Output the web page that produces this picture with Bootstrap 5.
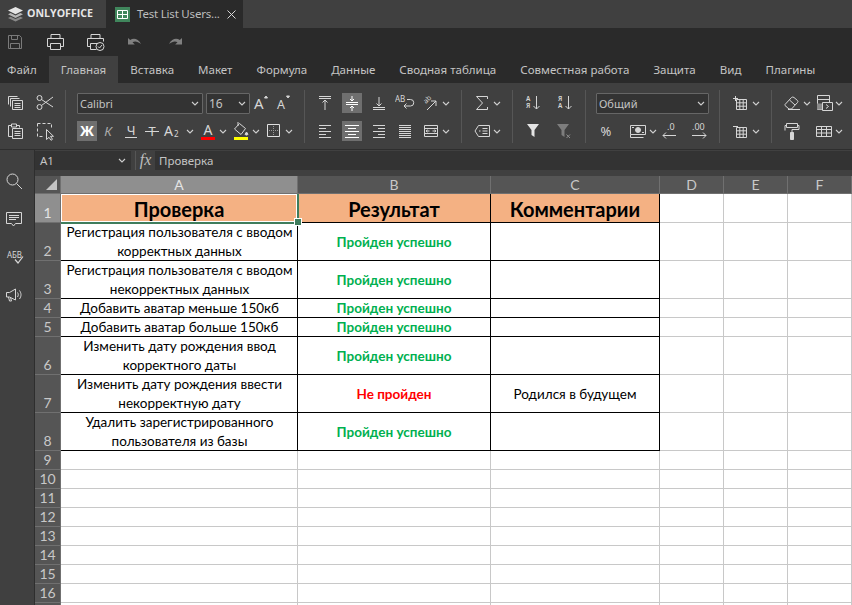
<!DOCTYPE html>
<html lang="ru">
<head>
    <meta charset="UTF-8">
    <meta name="viewport" content="width=device-width, initial-scale=1.0">
    <title>Test List Users</title>
    <link href="https://cdn.jsdelivr.net/npm/bootstrap@5.3.3/dist/css/bootstrap.min.css" rel="stylesheet">
    <script defer src="https://cdn.jsdelivr.net/npm/bootstrap@5.3.3/dist/js/bootstrap.bundle.min.js"></script>
    <style>
        html, body { height: 605px; overflow: hidden; background: #404040; }
        body { font-family: "Noto Sans", "Liberation Sans", sans-serif; font-size: 11.55px; color: #d0d0d0; }
        svg { display: block; fill: none; stroke: #d6d6d6; stroke-width: 1; }
        svg text { fill: #d6d6d6; stroke: none; font-family: "Noto Sans", sans-serif; }

        .title-bar { height: 28px; background: #404040; }
        .logo-box { width: 107px; padding-left: 7px; border-right: 1px solid #2a2a2a; gap: 3px; }
        .logo-text { font-weight: 700; font-size: 10.6px; color: #e6e6e6; font-family: "Open Sans", sans-serif; }
        .doc-tab { width: 136px; background: #2a2a2a; padding-left: 8px; gap: 7px; font-size: 11.5px; color: #bdbdbd; letter-spacing: -.2px; }

        .quick-bar { height: 28px; background: #2a2a2a; padding-left: 5px; gap: 20px; }
        .quick-bar > div { width: 20px; }

        .tab-bar { height: 27px; background: #2a2a2a; }
        .tab-item { padding: 0 12px; line-height: 27px; color: #c4c4c4; }
        .tab-item:first-child { padding-left: 7px; }
        .tab-item.cur { background: #404040; }

        .tool-bar { height: 67px; background: #404040; padding: 10px 0 0 5px; border-bottom: 1px solid #2e2e2e; }
        .tb-grp { display: flex; flex-direction: column; gap: 8px; }
        .tb-row { display: flex; height: 20px; align-items: center; }
        .tb-sep { width: 1px; height: 53px; background: #565656; margin: -3px 10px 0 10px; }
        .ic { width: 20px; height: 20px; flex: none; }
        .ic.on { background: #6f6f6f; }
        .crt { width: 10px; height: 20px; flex: none; display: flex; align-items: center; justify-content: center; }
        .combo { height: 21px; background: #333; border: 1px solid #666; border-radius: 1px; padding: 0 3px 0 2px; line-height: 19px; font-size: 11px; color: #c4c4c4; display: flex; justify-content: space-between; align-items: center; }
        .sp1 { margin-left: 1px; } .sp2 { margin-left: 2px; } .sp3 { margin-left: 3px; }
        .sp7 { margin-left: 7px; } .sp6 { margin-left: 6px; } .sp10 { margin-left: 10px; } .sp12 { margin-left: 12px; }

        .side-bar { width: 35px; flex: none; background: #404040; border-right: 1px solid #2e2e2e; padding-top: 21px; gap: 18px; }
        .side-bar > div { width: 20px; height: 20px; margin-left: 4px; }

        .formula-bar { height: 26px; background: #404040; padding-top: 1px; }
        .name-box { width: 96px; height: 19px; background: #333; padding: 0 5px; font-size: 11.5px; line-height: 19px; color: #c4c4c4; }
        .fx-box { width: 20px; height: 19px; margin-left: 4px; font-family: "Liberation Serif", serif; font-style: italic; font-size: 16px; line-height: 17px; color: #bdbdbd; text-align: center; border-left: 1px solid #565656; }
        .formula-input { height: 19px; background: #333; padding: 0 4px; line-height: 19px; font-size: 11.5px; color: #c4c4c4; }

        .sheet-wrap { position: relative; }
        .sheet { border-collapse: separate; border-spacing: 0; table-layout: fixed; width: 817px; font-family: Lato, "Liberation Sans", sans-serif; font-size: 13.5px; color: #000; background: #fff; }
        .sheet th { background: #555; color: #c8c8c8; font-weight: 400; text-align: center; border-right: 1px solid #707070; border-bottom: 1px solid #707070; padding: 0; font-size: 14px; }
        .sheet thead th { height: 18px; line-height: 17px; }
        .sheet tbody th { vertical-align: bottom; line-height: 18px; }
        .sheet th.sel { background: #8f8f8f; color: #e4e4e4; }
        .sheet td { border-right: 1px solid #c8c8c8; border-bottom: 1px solid #c8c8c8; padding: 0; text-align: center; vertical-align: middle; line-height: 18px; }
        .sheet td.bx { border-right-color: #000; border-bottom-color: #000; }
        .sheet td.hd { background: #f4b183; font-size: 20px; font-weight: 700; line-height: 24px; padding-top: 2px; }
        .sheet td.ok { color: #00b050; font-weight: 700; }
        .sheet td.bad { color: #f00; font-weight: 700; }
        .sheet td.a-col { padding-left: 1px; }
        .sheet .r2 td.ok, .sheet .r2 td.bad, .sheet .r2 td.cmt { padding-top: 1px; }
        .two-ln { line-height: 19px; margin-bottom: -1px; }
        .r1 { height: 29px; } .r2 { height: 38px; } .r3 { height: 19px; }
        .corner { position: relative; }
        .corner::after { content: ""; position: absolute; right: 3px; bottom: 3px; border-left: 11px solid transparent; border-bottom: 11px solid #c4c4c4; }
        .sel-frame { position: absolute; left: 26px; top: 18px; width: 238px; height: 30px; border-right: 2px solid #3f7d5c; border-bottom: 2px solid #3f7d5c; box-shadow: inset 0 0 0 1px #fff; pointer-events: none; }
        .sel-dot { position: absolute; left: 259px; top: 42px; width: 6px; height: 6px; background: #3f7d5c; border: 1px solid #fff; box-sizing: content-box; }
    </style>
</head>
<body>
    <svg width="0" height="0" class="position-absolute">
        <defs>
            <symbol id="caret" viewBox="0 0 8 5"><path d="M1 1l3 3 3-3" fill="none" stroke="#cfcfcf" stroke-width="1.1"/></symbol>
        </defs>
    </svg>

    <!-- title bar -->
    <div class="title-bar d-flex">
        <div class="logo-box d-flex align-items-center">
            <svg width="17" height="17" viewBox="0 0 17 17" style="stroke:none"><path d="M8.500 1L16 4.600 8.500 8.200 1 4.600z" fill="#e6e6e6"/><path d="M1 8.300l2.600-1.200 4.900 2.300 4.900-2.300L16 8.300l-7.500 3.600z" fill="#b8b8b8"/><path d="M1 12l2.600-1.200 4.900 2.300 4.900-2.300L16 12l-7.500 3.600z" fill="#8a8a8a"/></svg>
            <span class="logo-text">ONLYOFFICE</span>
        </div>
        <div class="doc-tab d-flex align-items-center">
            <svg width="15" height="15" viewBox="0 0 15 15" style="stroke:#fff"><rect width="15" height="15" fill="#40865c" stroke="none"/><path d="M2.500 3.500h10v8h-10zM2.500 7.500h10M7.500 3.500v8"/></svg>
            <span class="text-nowrap">Test List Users...</span>
            <svg width="9" height="9" viewBox="0 0 9 9"><path d="M.5.5l8 8M8.500.5l-8 8"/></svg>
        </div>
    </div>

    <!-- quick access -->
    <div class="quick-bar d-flex align-items-center">
        <div><svg width="20" height="20" viewBox="0 0 20 20" style="stroke:#7a7a7a"><path d="M3.500 3.500h11l2 2v11h-13zM6.500 3.500v4h6v-4M5.500 16.500v-5h9v5"/></svg></div>
        <div><svg width="20" height="20" viewBox="0 0 20 20"><path d="M6 6.500v-4h9v4M5.500 14.500h-3v-8h16v8h-3M5.500 11.500h10v6h-10z"/></svg></div>
        <div><svg width="20" height="20" viewBox="0 0 20 20"><path d="M6 6.500v-4h9v4M5.500 14.500h-3v-8h16v3M5.500 11.500h7M5.500 11.500v6h6"/><circle cx="15" cy="14.500" r="4"/><path d="M13 14.500l1.500 1.500 2.500-3"/></svg></div>
        <div><svg width="20" height="20" viewBox="0 0 20 20" style="stroke:none"><path d="M3 12.500V6l2.200 2.100c3.300-2.300 7.800-1.600 10.800 4-3.200-2.800-6.200-3.400-8.500-1.900l2.300 2.300z" fill="#808080"/></svg></div>
        <div><svg width="20" height="20" viewBox="0 0 20 20" style="stroke:none"><path d="M17 12.500V6l-2.200 2.100c-3.300-2.300-7.800-1.600-10.800 4 3.200-2.800 6.200-3.400 8.500-1.900l-2.300 2.300z" fill="#808080"/></svg></div>
    </div>

    <!-- ribbon tabs -->
    <div class="tab-bar d-flex">
        <div class="tab-item">Файл</div>
        <div class="tab-item cur">Главная</div>
        <div class="tab-item">Вставка</div>
        <div class="tab-item">Макет</div>
        <div class="tab-item">Формула</div>
        <div class="tab-item">Данные</div>
        <div class="tab-item">Сводная таблица</div>
        <div class="tab-item">Совместная работа</div>
        <div class="tab-item">Защита</div>
        <div class="tab-item">Вид</div>
        <div class="tab-item">Плагины</div>
    </div>

    <!-- ribbon toolbar -->
    <div class="tool-bar d-flex">
        <div class="tb-grp">
            <div class="tb-row">
                <div class="ic"><svg width="20" height="20" viewBox="0 0 20 20"><path d="M3.500 11.500v-8h9M5.500 13.500v-8h9M7.500 7.500h10v9h-10zM9.500 10.500h6M9.500 12.500h6M9.500 14.500h6"/></svg></div>
                <div class="ic sp10"><svg width="20" height="20" viewBox="0 0 20 20"><circle cx="4.500" cy="5" r="2.500"/><circle cx="4.500" cy="14" r="2.500"/><path d="M6.500 6.500L18 14M6.500 12.500L18 4"/></svg></div>
            </div>
            <div class="tb-row">
                <div class="ic"><svg width="20" height="20" viewBox="0 0 20 20"><path d="M7 4.500h-3.500v11h4M6.500 3h5v3h-5zM14.500 6.500v-2h-3M7.500 7.500h10v10h-10zM9.500 10.500h6M9.500 12.500h6M9.500 14.500h6"/></svg></div>
                <div class="ic sp10"><svg width="20" height="20" viewBox="0 0 20 20"><path d="M2.500 2.500h14v6M2.500 2.500v13h7" stroke-dasharray="3 2"/><path d="M11.500 8.500v10l2.500-2.200 2 3 1.500-1-2-3h3z"/></svg></div>
            </div>
        </div>
        <div class="tb-sep"></div>
        <div class="tb-grp" style="margin-left:1px">
            <div class="tb-row">
                <div class="combo" style="width:126px"><span>Calibri</span><svg width="8" height="5"><use href="#caret"/></svg></div>
                <div class="combo sp3" style="width:44px;font-size:12px"><span>16</span><svg width="8" height="5"><use href="#caret"/></svg></div>
                <div class="ic sp2"><svg width="20" height="20" viewBox="0 0 20 20"><text x="2" y="16" font-size="15">A</text><path d="M12.500 5l1.500-2 1.500 2z" fill="#d6d6d6"/></svg></div>
                <div class="ic sp2"><svg width="20" height="20" viewBox="0 0 20 20"><text x="3" y="16" font-size="12.500">A</text><path d="M12.500 3h3L14 5z" fill="#d6d6d6"/></svg></div>
            </div>
            <div class="tb-row">
                <div class="ic on"><svg width="20" height="20" viewBox="0 0 20 20"><text x="10" y="15" font-size="14" font-weight="700" text-anchor="middle" style="fill:#fff">Ж</text></svg></div>
                <div class="ic sp1"><svg width="20" height="20" viewBox="0 0 20 20"><text x="10" y="15" font-size="13.500" font-style="italic" text-anchor="middle" style="fill:#aaa">К</text></svg></div>
                <div class="ic sp3"><svg width="20" height="20" viewBox="0 0 20 20"><text x="10" y="14" font-size="13" text-anchor="middle">Ч</text><path d="M4 16.500h12"/></svg></div>
                <div class="ic sp1"><svg width="20" height="20" viewBox="0 0 20 20"><text x="10" y="15" font-size="13" text-anchor="middle">Т</text><path d="M3 10.500h14"/></svg></div>
                <div class="ic sp1"><svg width="20" height="20" viewBox="0 0 20 20"><text x="1" y="15" font-size="14">A</text><text x="11" y="16" font-size="8">2</text></svg></div>
                <div class="crt sp2"><svg width="8" height="5"><use href="#caret"/></svg></div>
                <div class="ic sp3"><svg width="20" height="20" viewBox="0 0 20 20"><text x="10" y="14" font-size="14" text-anchor="middle">A</text><path d="M3 17.500h14" stroke="#f00" stroke-width="3"/></svg></div>
                <div class="crt"><svg width="8" height="5"><use href="#caret"/></svg></div>
                <div class="ic sp3"><svg width="20" height="20" viewBox="0 0 20 20"><path d="M3.500 8l5-5.500 6 5-4.500 6z"/><path d="M7 1v4"/><path d="M15.500 11l1.500 2.200a1.700 1.700 0 0 1-3 0z" fill="#d6d6d6"/><path d="M3 17.500h14" stroke="#ff0" stroke-width="3"/></svg></div>
                <div class="crt"><svg width="8" height="5"><use href="#caret"/></svg></div>
                <div class="ic sp3"><svg width="20" height="20" viewBox="0 0 20 20"><path d="M3.500 3.500h12v12h-12z" stroke="#e0e0e0"/><path d="M9.500 5v9M5 9.500h9" stroke-dasharray="1 1" stroke="#999"/></svg></div>
                <div class="crt"><svg width="8" height="5"><use href="#caret"/></svg></div>
            </div>
        </div>
        <div class="tb-sep"></div>
        <div class="tb-grp">
            <div class="tb-row">
                <div class="ic"><svg width="20" height="20" viewBox="0 0 20 20"><path d="M4 3.500h12M4 5.500h12M10 17V7M7.500 9.500L10 7l2.500 2.500"/></svg></div>
                <div class="ic on sp7"><svg width="20" height="20" viewBox="0 0 20 20" style="stroke:#fff"><path d="M4 9.500h12M4 11.500h12M10 3v5M8 6l2 2 2-2M10 18v-5M8 15l2-2 2 2"/></svg></div>
                <div class="ic sp7"><svg width="20" height="20" viewBox="0 0 20 20"><path d="M4 14.500h12M4 16.500h12M10 4v9M7.500 10.500L10 13l2.500-2.500"/></svg></div>
                <div class="ic sp6"><svg width="20" height="20" viewBox="0 0 20 20"><text x="0" y="9" font-size="8">AB</text><path d="M12 6.500h3.500a3.200 3.200 0 0 1 0 6.500H9M11.500 10.500L9 13l2.500 2.500"/></svg></div>
                <div class="ic sp6"><svg width="20" height="20" viewBox="0 0 20 20"><text x="5" y="11" font-size="7" transform="rotate(-45 5 11)">ab</text><path d="M6 17l9-9M10 8h5v5"/></svg></div>
                <div class="crt"><svg width="8" height="5"><use href="#caret"/></svg></div>
            </div>
            <div class="tb-row">
                <div class="ic"><svg width="20" height="20" viewBox="0 0 20 20"><path d="M4 4.500h12M4 7.500h7M4 10.500h12M4 13.500h7M4 16.500h12"/></svg></div>
                <div class="ic on sp7"><svg width="20" height="20" viewBox="0 0 20 20" style="stroke:#fff"><path d="M3 4.500h14M6 7.500h8M3 10.500h14M6 13.500h8M3 16.500h14"/></svg></div>
                <div class="ic sp7"><svg width="20" height="20" viewBox="0 0 20 20"><path d="M4 4.500h12M9 7.500h7M4 10.500h12M9 13.500h7M4 16.500h12"/></svg></div>
                <div class="ic sp6"><svg width="20" height="20" viewBox="0 0 20 20"><path d="M4 4.500h12M4 6.500h12M4 8.500h12M4 10.500h12M4 12.500h12M4 14.500h12M4 16.500h12"/></svg></div>
                <div class="ic sp6"><svg width="20" height="20" viewBox="0 0 20 20"><path d="M3.500 4.500h13v11h-13zM3.500 7.500h13M3.500 12.500h13M5 10h3.500M5 10l1.500-1.200M5 10l1.500 1.200M15 10h-3.500M15 10l-1.500-1.200M15 10l-1.500 1.200"/></svg></div>
                <div class="crt"><svg width="8" height="5"><use href="#caret"/></svg></div>
            </div>
        </div>
        <div class="tb-sep"></div>
        <div class="tb-grp">
            <div class="tb-row">
                <div class="ic"><svg width="20" height="20" viewBox="0 0 20 20"><path d="M15.500 6V3.500H4.500L10.500 10l-6 6.500h11V14"/></svg></div>
                <div class="crt"><svg width="8" height="5"><use href="#caret"/></svg></div>
            </div>
            <div class="tb-row">
                <div class="ic"><svg width="20" height="20" viewBox="0 0 20 20"><path d="M6.500 4.500h11v11h-11L3 10zM7 10h1.500M10.500 7.500h5M10.500 10h5M10.500 12.500h5"/></svg></div>
                <div class="crt"><svg width="8" height="5"><use href="#caret"/></svg></div>
            </div>
        </div>
        <div class="tb-sep"></div>
        <div class="tb-grp">
            <div class="tb-row">
                <div class="ic"><svg width="20" height="20" viewBox="0 0 20 20"><text x="3" y="8" font-size="6.500" font-weight="600">А</text><text x="3" y="15" font-size="6.500" font-weight="600">Я</text><path d="M13.500 3v13M10.500 13l3 3 3-3"/></svg></div>
                <div class="ic sp12"><svg width="20" height="20" viewBox="0 0 20 20"><text x="3" y="8" font-size="6.500" font-weight="600">Я</text><text x="3" y="15" font-size="6.500" font-weight="600">А</text><path d="M13.500 3v13M10.500 13l3 3 3-3"/></svg></div>
            </div>
            <div class="tb-row">
                <div class="ic"><svg width="20" height="20" viewBox="0 0 20 20" style="stroke:none"><path d="M4 3h12l-4.500 6v7l-3-2V9z" fill="#e4e4e4"/></svg></div>
                <div class="ic sp12"><svg width="20" height="20" viewBox="0 0 20 20"><path d="M2 3h12L9.500 9v7l-3-2V9z" fill="#7d7d7d" stroke="none"/><path d="M11.500 13.500l3.500 3.500M15 13.500L11.500 17" stroke="#8f8f8f"/></svg></div>
            </div>
        </div>
        <div class="tb-sep"></div>
        <div class="tb-grp">
            <div class="tb-row">
                <div class="combo" style="width:113px"><span>Общий</span><svg width="8" height="5"><use href="#caret"/></svg></div>
            </div>
            <div class="tb-row">
                <div class="ic"><svg width="20" height="20" viewBox="0 0 20 20"><text x="10" y="15" font-size="13" text-anchor="middle">%</text></svg></div>
                <div class="ic sp12"><svg width="20" height="20" viewBox="0 0 20 20"><path d="M2.500 4.500h15v9h-15zM2.500 13.500v3h13"/><circle cx="10" cy="9" r="2.500" fill="#d6d6d6"/><path d="M4 6.500h2M14 11.500h2"/></svg></div>
                <div class="crt"><svg width="8" height="5"><use href="#caret"/></svg></div>
                <div class="ic sp1"><svg width="20" height="20" viewBox="0 0 20 20"><text x="8" y="9" font-size="9">.0</text><path d="M17 14.500H4M7 11.500l-3 3 3 3"/></svg></div>
                <div class="ic sp10"><svg width="20" height="20" viewBox="0 0 20 20"><text x="3" y="9" font-size="9">.00</text><path d="M3 14.500h14M14 11.500l3 3-3 3"/></svg></div>
            </div>
        </div>
        <div class="tb-sep"></div>
        <div class="tb-grp" style="margin-left:1px">
            <div class="tb-row">
                <div class="ic"><svg width="20" height="20" viewBox="0 0 20 20"><path d="M2 5.500h5M4.500 3v5"/><path d="M5.500 6.500h10v10h-10zM5.500 9.800h10M5.500 13.200h10M8.800 6.500v10M12.200 6.500v10"/></svg></div>
                <div class="crt"><svg width="8" height="5"><use href="#caret"/></svg></div>
            </div>
            <div class="tb-row">
                <div class="ic"><svg width="20" height="20" viewBox="0 0 20 20"><path d="M2 5.500h5"/><path d="M5.500 6.500h10v10h-10zM5.500 9.800h10M5.500 13.200h10M8.800 6.500v10M12.200 6.500v10"/></svg></div>
                <div class="crt"><svg width="8" height="5"><use href="#caret"/></svg></div>
            </div>
        </div>
        <div class="tb-sep"></div>
        <div class="tb-grp">
            <div class="tb-row">
                <div class="ic"><svg width="20" height="20" viewBox="0 0 20 20"><path d="M3 11.500l6.500-7a2 2 0 0 1 2.500 0l3.500 3a1.500 1.500 0 0 1 0 2l-6 6.500H7L3 12.500a.7.7 0 0 1 0-1zM7.500 7L13 12M6 16.500h12"/></svg></div>
                <div class="crt"><svg width="8" height="5"><use href="#caret"/></svg></div>
                <div class="ic sp2"><svg width="20" height="20" viewBox="0 0 20 20"><path d="M3.500 2.500h12v14h-12zM3.500 6.500h12"/><path d="M3 10.500h6v6H3z" fill="#8a8a8a" stroke="none"/><path d="M8.500 9.500h10v8h-10z" fill="#404040"/><path d="M12 11.500l2.500 2-2.500 2"/></svg></div>
                <div class="crt"><svg width="8" height="5"><use href="#caret"/></svg></div>
            </div>
            <div class="tb-row">
                <div class="ic"><svg width="20" height="20" viewBox="0 0 20 20"><path d="M4.500 2.500h11v4h-11zM15.500 4.500h1.500v4H10v3M4.500 4.500H3v5"/><path d="M8.500 11.500h3v7h-3z" fill="#d6d6d6"/></svg></div>
                <div class="crt"></div>
                <div class="ic sp2"><svg width="20" height="20" viewBox="0 0 20 20"><path d="M2.500 5.500h15v10h-15zM2.500 8.500h15M2.500 12h15M7.500 5.500v10M12.500 5.500v10"/></svg></div>
                <div class="crt"><svg width="8" height="5"><use href="#caret"/></svg></div>
            </div>
        </div>
    </div>

    <div class="d-flex">
        <!-- left panel -->
        <div class="side-bar d-flex flex-column">
            <div><svg width="20" height="20" viewBox="0 0 20 20"><circle cx="8.500" cy="8.500" r="5.500"/><path d="M12.500 12.500L18 18"/></svg></div>
            <div><svg width="20" height="20" viewBox="0 0 20 20"><path d="M2.500 3.500h15v11h-6l-2 2.500-2-2.500h-5zM5 6.500h10M5 8.500h10M5 10.500h7"/></svg></div>
            <div><svg width="20" height="20" viewBox="0 0 20 20"><text x="3" y="11" font-size="9" textLength="15" lengthAdjust="spacingAndGlyphs">АБВ</text><path d="M11 12.500l3 3.500 5-6.500" stroke-width="1.200"/></svg></div>
            <div><svg width="20" height="20" viewBox="0 0 20 20"><path d="M2.500 7.500h3l6-3.500v11l-6-3h-3zM4.500 12l1 4h2l-1-3.500M13.500 7.500c1 1.500 1 3 0 4.500M15.500 5.500c2 3 2 5.500 0 8.500"/></svg></div>
        </div>

        <div class="flex-grow-1">
            <!-- formula bar -->
            <div class="formula-bar d-flex">
                <div class="name-box d-flex justify-content-between align-items-center"><span>A1</span><svg width="8" height="5"><use href="#caret"/></svg></div>
                <div class="fx-box">fx</div>
                <div class="formula-input flex-grow-1">Проверка</div>
            </div>

            <!-- sheet -->
            <div class="sheet-wrap">
                <table class="sheet">
                    <colgroup>
                        <col style="width:26px"><col style="width:237px"><col style="width:193px"><col style="width:169px"><col style="width:64px"><col style="width:64px"><col style="width:64px">
                    </colgroup>
                    <thead>
                        <tr><th class="corner"></th><th class="sel">A</th><th>B</th><th>C</th><th>D</th><th>E</th><th>F</th></tr>
                    </thead>
                    <tbody>
                        <tr class="r1"><th class="sel">1</th><td class="bx hd">Проверка</td><td class="bx hd">Результат</td><td class="bx hd">Комментарии</td><td></td><td></td><td></td></tr>
                        <tr class="r2"><th>2</th><td class="bx a-col"><div class="two-ln">Регистрация пользователя с вводом<br>корректных данных</div></td><td class="bx ok">Пройден успешно</td><td class="bx"></td><td></td><td></td><td></td></tr>
                        <tr class="r2"><th>3</th><td class="bx a-col"><div class="two-ln">Регистрация пользователя с вводом<br>некорректных данных</div></td><td class="bx ok">Пройден успешно</td><td class="bx"></td><td></td><td></td><td></td></tr>
                        <tr class="r3"><th>4</th><td class="bx a-col">Добавить аватар меньше 150кб</td><td class="bx ok">Пройден успешно</td><td class="bx"></td><td></td><td></td><td></td></tr>
                        <tr class="r3"><th>5</th><td class="bx a-col">Добавить аватар больше 150кб</td><td class="bx ok">Пройден успешно</td><td class="bx"></td><td></td><td></td><td></td></tr>
                        <tr class="r2"><th>6</th><td class="bx a-col"><div class="two-ln">Изменить дату рождения ввод<br>корректного даты</div></td><td class="bx ok">Пройден успешно</td><td class="bx"></td><td></td><td></td><td></td></tr>
                        <tr class="r2"><th>7</th><td class="bx a-col"><div class="two-ln">Изменить дату рождения ввести<br>некорректную дату</div></td><td class="bx bad">Не пройден</td><td class="bx cmt">Родился в будущем</td><td></td><td></td><td></td></tr>
                        <tr class="r2"><th>8</th><td class="bx a-col"><div class="two-ln">Удалить зарегистрированного<br>пользователя из базы</div></td><td class="bx ok">Пройден успешно</td><td class="bx"></td><td></td><td></td><td></td></tr>
                        <tr class="r3"><th>9</th><td></td><td></td><td></td><td></td><td></td><td></td></tr>
                        <tr class="r3"><th>10</th><td></td><td></td><td></td><td></td><td></td><td></td></tr>
                        <tr class="r3"><th>11</th><td></td><td></td><td></td><td></td><td></td><td></td></tr>
                        <tr class="r3"><th>12</th><td></td><td></td><td></td><td></td><td></td><td></td></tr>
                        <tr class="r3"><th>13</th><td></td><td></td><td></td><td></td><td></td><td></td></tr>
                        <tr class="r3"><th>14</th><td></td><td></td><td></td><td></td><td></td><td></td></tr>
                        <tr class="r3"><th>15</th><td></td><td></td><td></td><td></td><td></td><td></td></tr>
                        <tr class="r3"><th>16</th><td></td><td></td><td></td><td></td><td></td><td></td></tr>
                        <tr class="r3"><th></th><td></td><td></td><td></td><td></td><td></td><td></td></tr>
                    </tbody>
                </table>
                <div class="sel-frame"></div>
                <div class="sel-dot"></div>
            </div>
        </div>
    </div>
</body>
</html>
